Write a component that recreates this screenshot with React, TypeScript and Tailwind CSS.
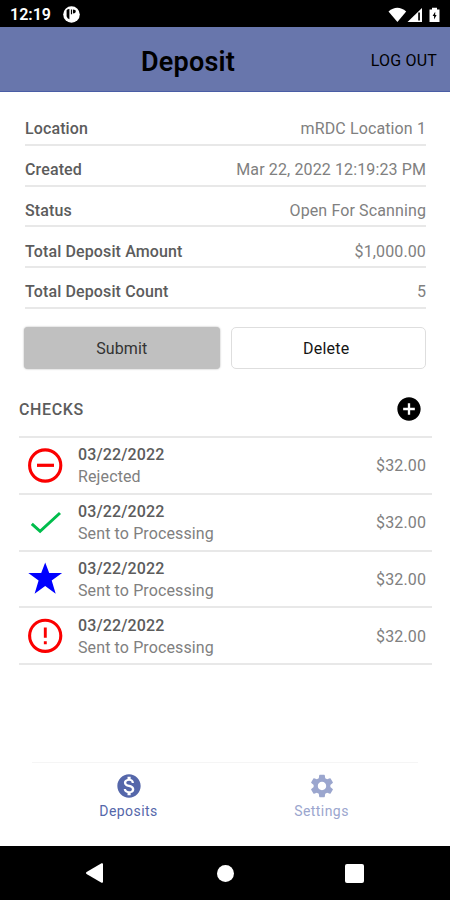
import React from "react";
import { MdAddCircle, MdMonetizationOn, MdSettings } from "react-icons/md";

const details = [
  { label: "Location", value: "mRDC Location 1" },
  { label: "Created", value: "Mar 22, 2022 12:19:23 PM" },
  { label: "Status", value: "Open For Scanning" },
  { label: "Total Deposit Amount", value: "$1,000.00" },
  { label: "Total Deposit Count", value: "5" },
];

function RejectedIcon() {
  return (
    <svg className="size-[41px] shrink-0 text-[#fb0000]" viewBox="0 0 41 41" fill="none" stroke="currentColor">
      <circle cx="20.2" cy="20.5" r="15.6" strokeWidth="3.1" />
      <path d="M12 20.3h17" strokeWidth="3.2" />
    </svg>
  );
}

function CheckIcon() {
  return (
    <svg className="size-[41px] shrink-0 text-[#00bd4c]" viewBox="0 0 41 41" fill="none" stroke="currentColor">
      <path d="M6.8 21.8l8.3 7.5L35 11" strokeWidth="3" />
    </svg>
  );
}

function StarIcon() {
  return (
    <svg className="size-[41px] shrink-0 text-[#0000ff]" viewBox="0 0 41 41" fill="currentColor">
      <path d="M20.2 4.4l4 10.7h12.9l-10.4 7.5 4 13.1-10.5-7.6L9.6 35.7l4-13.1L3.3 15.1h12.9z" />
    </svg>
  );
}

function AlertIcon() {
  return (
    <svg className="size-[41px] shrink-0 text-[#fb0000]" viewBox="0 0 41 41" fill="none" stroke="currentColor">
      <circle cx="20.2" cy="20.8" r="15.6" strokeWidth="3.1" />
      <path d="M20.3 12.6v10.2M20.3 26.3v3" strokeWidth="2.9" />
    </svg>
  );
}

const checks = [
  { icon: RejectedIcon, status: "Rejected" },
  { icon: CheckIcon, status: "Sent to Processing" },
  { icon: StarIcon, status: "Sent to Processing" },
  { icon: AlertIcon, status: "Sent to Processing" },
];

function StatusBar() {
  return (
    <div className="flex h-[27px] shrink-0 items-center bg-black pl-[10px] pr-[8px] pt-[2px] text-white">
      <span className="text-[16px] font-semibold leading-none">12:19</span>
      <svg className="ml-[12px] size-[17px]" viewBox="0 0 17 17">
        <circle cx="8.5" cy="8.5" r="8.3" fill="white" />
        <path d="M3.6 4.2q1-1.2 2.8-1.2v10.2q-2.2-.6-2.8-3zM7.9 3.6h1.2v4.6H7.9zM10 3.6q2.8 0 2.8 1.9T10 7.4z" fill="black" />
      </svg>
      <svg className="ml-auto h-[16px] w-[54px]" viewBox="0 0 54 16">
        <path d="M.5 4.5Q9.3-3 18.2 4.5L9.4 15z" fill="white" />
        <path d="M34 1v14H19.5z" fill="white" />
        <path d="M30.2 5.5h1.7v8h-1.7z" fill="black" />
        <path d="M41.5 2.5H44V.7h5v1.8h2.5V15h-10z" fill="white" />
        <path d="M47.2 4.8L44.6 9h1.5v3.5L48.6 8h-1.4z" fill="black" />
      </svg>
    </div>
  );
}

function Header() {
  return (
    <header className="grid h-[65px] shrink-0 grid-cols-[141px_1fr_auto] items-center border-b border-[#4a5da5] bg-[#6876ac] pr-[13px] pt-[4px] text-black">
      <span />
      <h1 className="pt-[2px] text-[27px] font-semibold leading-none tracking-[0.2px]">Deposit</h1>
      <button className="text-[16px] leading-none tracking-[0.2px]">LOG OUT</button>
    </header>
  );
}

function Tab({ label, icon: Icon, className }: { label: string; icon: typeof MdSettings; className: string }) {
  return (
    <button className={`flex flex-1 flex-col items-center pt-[9px] ${className}`}>
      <Icon size={28} />
      <span className="mt-[3px] text-[14px] leading-[16px] tracking-[0.45px]">{label}</span>
    </button>
  );
}

export default function App() {
  return (
    <div className="flex h-[900px] w-[450px] flex-col overflow-hidden bg-white font-[Roboto,'Liberation_Sans',sans-serif]">
      <StatusBar />
      <Header />
      <main className="flex-1">
        <dl className="ml-[25px] mr-[24px] pt-[13px]">
          {details.map((d) => (
            <div key={d.label} className="flex h-[40.75px] items-center justify-between border-b-2 border-[#e8e8e8] pt-[10px] text-[16px] tracking-[0.12px]">
              <dt className="font-medium text-[#5c5c5c]">{d.label}</dt>
              <dd className="text-[#808080]">{d.value}</dd>
            </div>
          ))}
        </dl>
        <div className="mt-[18px] grid grid-cols-2 gap-[11px] pl-[24px] pr-[24px]">
          <button className="h-[42px] rounded-[4px] bg-[#c0c0c0] pt-[2px] text-[16px] tracking-[0.12px] text-[#333] shadow-[0_0_2px_#aaa]">Submit</button>
          <button className="h-[42px] rounded-[5px] border border-[#dedede] pt-[2px] pr-[4px] text-[16px] tracking-[0.2px] text-[#151515]">Delete</button>
        </div>
        <div className="ml-[19px] mr-[18px] flex h-[69px] items-center justify-between border-b-2 border-[#e8e8e8] pr-[9px] pt-[14px]">
          <h2 className="pt-[2px] text-[16px] font-medium tracking-[0.6px] text-[#5c5c5c]">CHECKS</h2>
          <button><MdAddCircle size={28} /></button>
        </div>
        <ul className="ml-[19px] mr-[18px]">
          {checks.map(({ icon: Icon, status }, i) => (
            <li key={i} className="flex h-[56.9px] items-center border-b-2 border-[#e8e8e8] pl-[6px] pr-[6px]">
              <Icon />
              <div className="ml-[12px] pt-[2px] text-[16px] leading-[22px] tracking-[0.12px]">
                <p className="font-medium text-[#5c5c5c]">03/22/2022</p>
                <p className="text-[#808080]">{status}</p>
              </div>
              <span className="ml-auto pt-[2px] text-[16px] tracking-[0.12px] text-[#808080]">$32.00</span>
            </li>
          ))}
        </ul>
      </main>
      <nav className="mx-[32px] flex h-[84px] shrink-0 border-t border-[#f5f5f5]">
        <Tab label="Deposits" icon={MdMonetizationOn} className="text-[#5567aa]" />
        <Tab label="Settings" icon={MdSettings} className="text-[#9ba6ce]" />
      </nav>
      <footer className="grid h-[54px] shrink-0 grid-cols-3 items-center bg-black px-[30px]">
        <svg className="ml-[56px] h-[20px] w-[17px]" viewBox="0 0 17 20">
          <path d="M0 10Q0 9.3 1 8.7L15.5.3Q17 0 17 1v18q0 1-1.5.7L1 11.3Q0 10.7 0 10z" fill="white" />
        </svg>
        <div className="size-[17px] justify-self-center rounded-full bg-white" />
        <div className="mr-[56px] size-[19px] justify-self-end rounded-[2px] bg-white" />
      </footer>
    </div>
  );
}
